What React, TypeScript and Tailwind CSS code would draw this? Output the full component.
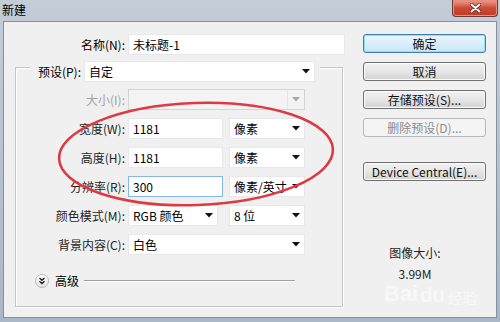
import React from "react"

const font = "font-['Microsoft_YaHei','Noto_Sans_CJK_SC',sans-serif]"

function Arrow({ disabled }: { disabled?: boolean }) {
  return (
    <svg width="8" height="5" viewBox="0 0 8 5" className="shrink-0">
      <path d="M0 0h8L4 4.5z" fill={disabled ? "#a8a8a8" : "#111"} />
    </svg>
  )
}

function Select({ value, w, disabled }: { value?: string; w: string; disabled?: boolean }) {
  if (disabled) {
    return (
      <div className={`${w} h-[21px] flex items-stretch border border-[#d4d4d4] bg-[#f3f3f3]`}>
        <div className="flex-1" />
        <div className="w-[17px] flex items-center justify-center border-l border-[#e4e4e4]">
          <Arrow disabled />
        </div>
      </div>
    )
  }
  return (
    <div className={`${w} h-[21px] flex items-center bg-white border border-[#e6e8eb] pl-[4px] pr-[4px]`}>
      <span className="flex-1 whitespace-nowrap text-[12px] leading-[16px]">{value}</span>
      <Arrow />
    </div>
  )
}

function Input({ value, w, focused }: { value: string; w: string; focused?: boolean }) {
  return (
    <div
      className={`${w} h-[21px] flex items-center bg-white border pl-[4px] text-[12px] leading-[16px] ${
        focused ? "border-[#86b7e6]" : "border-[#e6e8eb]"
      }`}
    >
      {value}
    </div>
  )
}

function Label({ text, disabled }: { text: string; disabled?: boolean }) {
  return (
    <div
      className={`w-[112px] pr-[3px] text-right text-[12px] leading-[16px] whitespace-nowrap ${
        disabled ? "text-[#a3a3a3]" : "text-[#1e1e1e]"
      }`}
    >
      {text}
    </div>
  )
}

function Button({ children, primary, disabled }: { children: React.ReactNode; primary?: boolean; disabled?: boolean }) {
  if (disabled) {
    return (
      <div className="w-[123px] h-[19px] flex items-center justify-center rounded-[3px] border border-[#b5b9bc] bg-[#f4f4f4] text-[12px] leading-[16px] text-[#8d8d8d]">
        {children}
      </div>
    )
  }
  return (
    <div
      className={`w-[123px] h-[19px] flex items-center justify-center rounded-[3px] border text-[12px] leading-[16px] text-[#111] ${
        primary
          ? "border-[#3c7fb1] bg-gradient-to-b from-[#eaf6fd] to-[#c9e6f8] shadow-[inset_0_0_0_1px_#8ee0f7]"
          : "border-[#707070] bg-gradient-to-b from-[#f2f2f2] via-[#e6e6e6] to-[#d3d3d3] shadow-[inset_0_0_0_1px_#fbfbfb]"
      }`}
    >
      {children}
    </div>
  )
}

export default function App() {
  return (
    <div className={`relative w-[500px] h-[322px] overflow-hidden flex flex-col bg-gradient-to-b from-[#c3cdd8] to-[#a9b7c6] ${font}`}>
      {/* title bar */}
      <div className="h-[21px] shrink-0 flex items-start">
        <span className="pl-[2px] pt-[2px] text-[12px] leading-[16px] text-black">新建</span>
        <div className="ml-auto mr-[2px] w-[46px] h-[17px] rounded-b-[4px] border border-t-0 border-[#6d3a33] bg-gradient-to-b from-[#e8a090] via-[#cc4a35] to-[#c03a24] flex items-center justify-center shadow-[inset_0_0_0_1px_#eb8f80]">
          <svg width="11" height="10" viewBox="0 0 11 10">
            <path d="M1.5 1.5l8 7M9.5 1.5l-8 7" stroke="#5a1a12" strokeWidth="3.2" strokeLinecap="round" />
            <path d="M1.5 1.5l8 7M9.5 1.5l-8 7" stroke="#fff" strokeWidth="2" strokeLinecap="round" />
          </svg>
        </div>
      </div>

      {/* client area */}
      <div className="flex-1 mx-[3px] mb-[4px] border border-[#84909d] bg-[#f0f0f0] flex">
        {/* left column */}
        <div className="w-[343px] shrink-0 flex flex-col pt-[12px]">
          <div className="flex items-center h-[21px]">
            <div className="w-[124px] pr-[3px] text-right text-[12px] leading-[16px]">名称(N):</div>
            <Input value="未标题-1" w="w-[217px]" />
          </div>

          <div className="mt-[12px] ml-[11px] w-[328px] h-[240px] shrink-0 border border-[#c5c5c5] shadow-[inset_1px_1px_0_#fff,1px_1px_0_#fff] flex flex-col">
            <div className="-mt-[7px] ml-[14px] self-start flex items-center bg-[#f0f0f0] px-[5px]">
              <div className="w-[49px] pr-[3px] text-right whitespace-nowrap text-[12px] leading-[16px]">预设(P):</div>
              <Select value="自定" w="w-[231px]" />
            </div>

            <div className="flex flex-col gap-[8px] mt-[7px]">
              <div className="flex items-center">
                <Label text="大小(I):" disabled />
                <Select w="w-[177px]" disabled />
              </div>
              <div className="flex items-center">
                <Label text="宽度(W):" />
                <Input value="1181" w="w-[95px]" />
                <div className="ml-[6px]">
                  <Select value="像素" w="w-[76px]" />
                </div>
              </div>
              <div className="flex items-center">
                <Label text="高度(H):" />
                <Input value="1181" w="w-[95px]" />
                <div className="ml-[6px]">
                  <Select value="像素" w="w-[76px]" />
                </div>
              </div>
              <div className="flex items-center">
                <Label text="分辨率(R):" />
                <Input value="300" w="w-[95px]" focused />
                <div className="ml-[6px]">
                  <Select value="像素/英寸" w="w-[76px]" />
                </div>
              </div>
              <div className="flex items-center">
                <Label text="颜色模式(M):" />
                <Select value="RGB 颜色" w="w-[90px]" />
                <div className="ml-[11px]">
                  <Select value="8 位" w="w-[76px]" />
                </div>
              </div>
              <div className="flex items-center">
                <Label text="背景内容(C):" />
                <Select value="白色" w="w-[177px]" />
              </div>
            </div>

            <div className="mt-[18px] ml-[19px] flex items-center">
              <div className="w-[14px] h-[14px] rounded-full border border-[#b9b9b9] bg-gradient-to-b from-white to-[#e2e2e2] flex items-center justify-center">
                <svg width="8" height="8" viewBox="0 0 8 8">
                  <path d="M1.5 1l2.5 2.3L6.5 1M1.5 4.3l2.5 2.3 2.5-2.3" fill="none" stroke="#222" strokeWidth="1.4" />
                </svg>
              </div>
              <span className="ml-[6px] text-[12px] leading-[16px]">高级</span>
              <div className="ml-[5px] w-[211px] h-[2px] border-t border-[#a0a0a0] border-b border-b-white" />
            </div>
          </div>
        </div>

        {/* right column */}
        <div className="ml-[16px] pt-[12px] flex flex-col">
          <div className="flex flex-col gap-[9px]">
            <Button primary>确定</Button>
            <Button>取消</Button>
            <Button>存储预设(S)...</Button>
            <Button disabled>删除预设(D)...</Button>
          </div>
          <div className="mt-[25px]">
            <Button>Device Central(E)...</Button>
          </div>
          <div className="mt-[64px] w-[104px] text-center text-[12px] leading-[16px] text-[#1e1e1e]">图像大小:</div>
          <div className="mt-[5px] w-[104px] text-center text-[12px] leading-[16px] text-[#1e1e1e]">3.99M</div>
        </div>
      </div>

      {/* red annotation ellipse */}
      <svg className="absolute left-0 top-0 pointer-events-none" width="500" height="322">
        <ellipse
          cx="196"
          cy="154"
          rx="137"
          ry="51"
          transform="rotate(-2 196 154)"
          fill="none"
          stroke="#db3b45"
          strokeWidth="2.6"
        />
      </svg>

      {/* watermark */}
      <div className="absolute left-[384px] top-[283px] pointer-events-none flex items-end text-white/60">
        <span className="text-[22px] font-bold leading-none font-['Liberation_Sans',sans-serif]">Bai</span>
        <span className="text-[20px] font-bold leading-none ml-[2px] font-['Liberation_Sans',sans-serif]">du</span>
        <span className="text-[15px] leading-none ml-[3px]">经验</span>
      </div>
    </div>
  )
}
